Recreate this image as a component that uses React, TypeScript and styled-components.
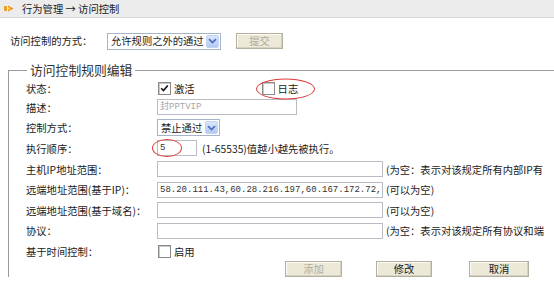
import React from 'react'
import styled, { createGlobalStyle } from 'styled-components'

const GlobalStyle = createGlobalStyle`
  body {
    margin: 0;
    background: #fff;
    font-family: "Noto Sans CJK SC", "DejaVu Sans", sans-serif;
    font-size: 10.3px;
    color: #1a1a1a;
  }
`;

const Header = styled.div`
  height: 17px;
  display: flex;
  align-items: center;
  gap: 8px;
  padding-left: 4px;
  background: #ececec;
  border-bottom: 1px solid #d6d6d6;
  line-height: 17px;
`;

const ModeRow = styled.div`
  display: flex;
  align-items: center;
  height: 18px;
  margin-top: 14px;
  padding-left: 10px;
`;

const ModeLabel = styled.span`
  width: 97px;
  line-height: 18px;
`;

const SelectBox = styled.div<{ w: number }>`
  width: ${p => p.w}px;
  height: 17px;
  box-sizing: border-box;
  display: flex;
  align-items: center;
  justify-content: space-between;
  padding: 1px 1px 1px 3px;
  border: 1px solid #a5b4c8;
  background: #fff;
  line-height: 14px;
  white-space: nowrap;
`;

const Arrow = styled.span`
  width: 13px;
  height: 13px;
  flex: none;
  display: flex;
  align-items: center;
  justify-content: center;
  background: linear-gradient(#dbe6fc, #b4c9f5);
  border: 1px solid #c2d2f3;
  box-sizing: border-box;
  border-radius: 2px;
`;

const Button = styled.button<{ w: number; off?: boolean }>`
  width: ${p => p.w}px;
  height: 16px;
  padding: 0;
  font-family: inherit;
  font-size: 10.3px;
  line-height: 14px;
  color: ${p => (p.off ? '#b0ab9a' : '#1a1a1a')};
  background: #ece9d8;
  border: 1px solid #b3b09f;
  box-shadow: inset -1px -1px 0 #d6d2c2, inset 1px 1px 0 #fbfaf5;
`;

const Fieldset = styled.fieldset`
  margin: 12px 0 0 8px;
  padding: 2px 0 0 17px;
  border: 1px solid #9a9a9a;
  border-right: 0;
  border-bottom: 0;
  min-width: 0;
`;

const Legend = styled.legend`
  margin-left: 1px;
  padding: 0 3px;
  font-size: 12.8px;
  line-height: 16px;
  color: #333;
`;

const Row = styled.div<{ h: number }>`
  display: flex;
  align-items: center;
  height: ${p => p.h}px;
`;

const Label = styled.span`
  width: 131px;
  flex: none;
  white-space: nowrap;
`;

const TextBox = styled.div<{ w: number; muted?: boolean }>`
  width: ${p => p.w}px;
  height: 16px;
  box-sizing: border-box;
  flex: none;
  border: 1px solid #b9bcc2;
  background: #fff;
  padding-left: 2px;
  font-family: "Liberation Mono", "Noto Sans CJK SC", monospace;
  font-size: 9px;
  line-height: 14px;
  color: ${p => (p.muted ? '#a6a6a6' : '#333')};
  white-space: nowrap;
  overflow: hidden;
`;

const Hint = styled.span<{ gap: number }>`
  margin-left: ${p => p.gap}px;
  white-space: nowrap;
`;

const Check = styled.span`
  width: 13px;
  height: 13px;
  box-sizing: border-box;
  flex: none;
  margin-left: 1px;
  border: 1px solid #8a8a8a;
  box-shadow: inset 1px 1px 0 #c9c9c9;
  background: #fff;
  display: flex;
  align-items: center;
  justify-content: center;
`;

const CheckGroup = styled.span<{ gap?: number }>`
  position: relative;
  display: flex;
  align-items: center;
  gap: 3px;
  margin-left: ${p => p.gap ?? 0}px;
`;

const Mark = styled.span<{ w: number; h: number; dx: number }>`
  position: absolute;
  left: ${p => p.dx}px;
  top: 50%;
  width: ${p => p.w}px;
  height: ${p => p.h}px;
  transform: translateY(-50%);
  border: 1px solid #e0393b;
  border-radius: 50%;
  box-sizing: border-box;
  pointer-events: none;
`;

const Wrap = styled.span`
  position: relative;
  display: flex;
`;

const Actions = styled.div`
  display: flex;
  align-items: center;
  padding-left: 259px;
  margin-top: -1px;
  gap: 34px;
`;

const Chevron = () => (
  <svg width="9" height="6" viewBox="0 0 9 6">
    <path d="M1 1.2 L4.5 4.6 L8 1.2" fill="none" stroke="#4d6fc0" strokeWidth="1.8" />
  </svg>
);

const Tick = () => (
  <svg width="9" height="9" viewBox="0 0 9 9">
    <path d="M1.2 4.2 L3.5 6.6 L7.8 1.6" fill="none" stroke="#111" strokeWidth="1.6" />
  </svg>
);

const CrumbIcon = () => (
  <svg width="10" height="7" viewBox="0 0 10 7">
    <rect x="0" y="1" width="3" height="5" fill="#f0a020" />
    <path d="M4 0.5 L9.5 3.5 L4 6.5 Z" fill="#e8901a" />
    <rect x="4" y="2.5" width="2" height="2" fill="#ffe070" />
  </svg>
);

const App: React.FC = () => {
  return (
    <>
      <GlobalStyle />
      <Header>
        <CrumbIcon />
        <span>行为管理 → 访问控制</span>
      </Header>
      <ModeRow>
        <ModeLabel>访问控制的方式：</ModeLabel>
        <SelectBox w={114}>
          <span>允许规则之外的通过</span>
          <Arrow><Chevron /></Arrow>
        </SelectBox>
        <Button w={47} off style={{ marginLeft: 15 }}>提交</Button>
      </ModeRow>
      <Fieldset>
        <Legend>访问控制规则编辑</Legend>
        <Row h={17}>
          <Label>状态：</Label>
          <CheckGroup>
            <Check><Tick /></Check>
            <span>激活</span>
          </CheckGroup>
          <CheckGroup gap={66}>
            <Check />
            <span>日志</span>
            <Mark w={59} h={21} dx={-5} />
          </CheckGroup>
        </Row>
        <Row h={20.6}>
          <Label>描述：</Label>
          <TextBox w={140} muted>封PPTVIP</TextBox>
        </Row>
        <Row h={20.6}>
          <Label>控制方式：</Label>
          <SelectBox w={63}>
            <span>禁止通过</span>
            <Arrow><Chevron /></Arrow>
          </SelectBox>
        </Row>
        <Row h={20.6}>
          <Label>执行顺序：</Label>
          <Wrap>
            <TextBox w={40}>5</TextBox>
            <Mark w={30} h={18} dx={-5} />
          </Wrap>
          <Hint gap={5}>(1-65535)值越小越先被执行。</Hint>
        </Row>
        <Row h={20.6}>
          <Label>主机IP地址范围：</Label>
          <TextBox w={226} />
          <Hint gap={3}>(为空：表示对该规定所有内部IP有</Hint>
        </Row>
        <Row h={20.6}>
          <Label>远端地址范围(基于IP)：</Label>
          <TextBox w={226}>58.20.111.43,60.28.216.197,60.167.172.72,</TextBox>
          <Hint gap={3}>(可以为空)</Hint>
        </Row>
        <Row h={20.6}>
          <Label>远端地址范围(基于域名)：</Label>
          <TextBox w={226} />
          <Hint gap={3}>(可以为空)</Hint>
        </Row>
        <Row h={20.6}>
          <Label>协议：</Label>
          <TextBox w={226} />
          <Hint gap={3}>(为空：表示对该规定所有协议和端</Hint>
        </Row>
        <Row h={20.6}>
          <Label>基于时间控制：</Label>
          <CheckGroup>
            <Check />
            <span>启用</span>
          </CheckGroup>
        </Row>
        <Actions>
          <Button w={57} off>添加</Button>
          <Button w={56}>修改</Button>
          <Button w={60} style={{ marginLeft: 3 }}>取消</Button>
        </Actions>
      </Fieldset>
    </>
  )
}

export default App
